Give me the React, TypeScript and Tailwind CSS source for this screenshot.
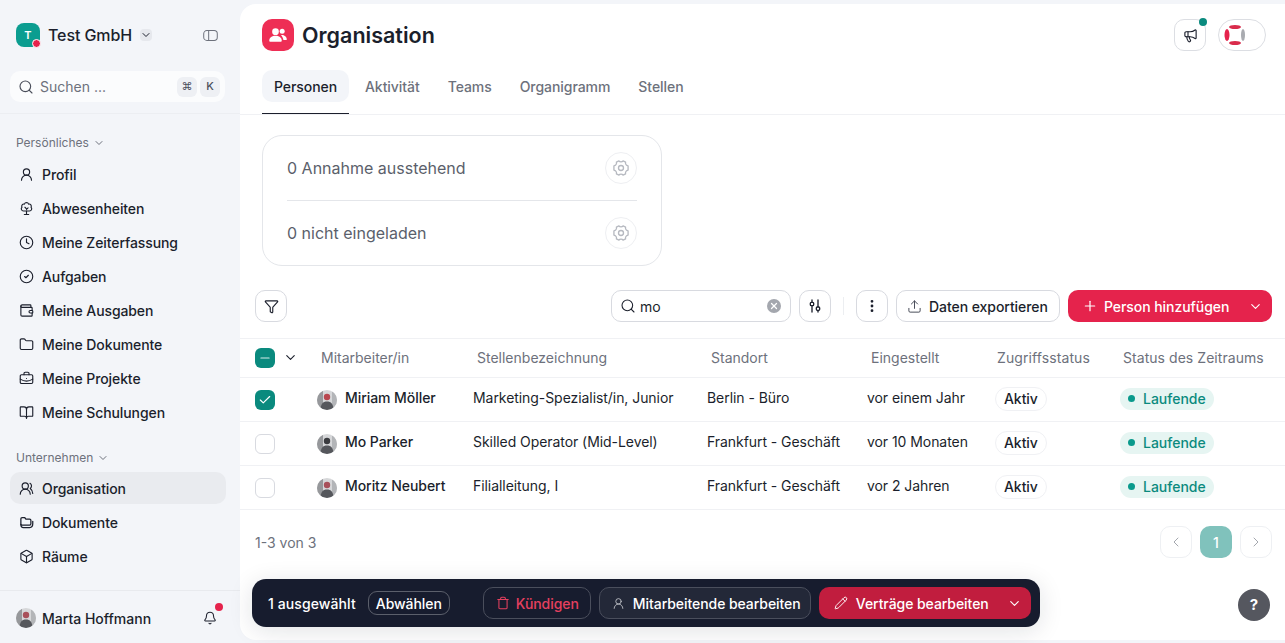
import {
  Bell,
  BookOpen,
  Box,
  BriefcaseBusiness,
  Check,
  ChevronDown,
  ChevronLeft,
  ChevronRight,
  CircleCheck,
  Clock,
  EllipsisVertical,
  Folder,
  Funnel,
  Megaphone,
  Minus,
  Pencil,
  Plus,
  Search,
  Trash,
  Upload,
  UserRound,
  UsersRound,
  Wallet,
  X,
} from "lucide-react";

function FoldersIcon({ className }: { className?: string }) {
  return (
    <svg viewBox="0 0 24 24" fill="none" stroke="currentColor" strokeWidth="2" strokeLinecap="round" strokeLinejoin="round" className={className}>
      <path d="M3 15V6a2 2 0 0 1 2-2h4l2 2.500h6a2 2 0 0 1 2 2V14a2 2 0 0 1-2 2H5a2 2 0 0 1-2-1z" />
      <path d="M3 15c0 3 1.500 5 4 5h10c3 0 5-2.500 5-6v-4" />
    </svg>
  );
}

function TreeIcon({ className }: { className?: string }) {
  return (
    <svg viewBox="0 0 24 24" fill="none" stroke="currentColor" strokeWidth="1.8" strokeLinecap="round" strokeLinejoin="round" className={className}>
      <path d="M12 2.500a3.500 3.500 0 0 1 3.300 2.500 3.500 3.500 0 0 1 4 5 3.500 3.500 0 0 1-2.500 6H7.200a3.500 3.500 0 0 1-2.500-6 3.500 3.500 0 0 1 4-5A3.500 3.500 0 0 1 12 2.500z" />
      <path d="M12 16v5.500M8.500 21.500h7M12 12.500l-2.500-2.500M12 13.500l2.500-2.500" />
    </svg>
  );
}

function SlidersIcon({ className }: { className?: string }) {
  return (
    <svg viewBox="0 0 24 24" fill="none" stroke="currentColor" strokeWidth="2" strokeLinecap="round" className={className}>
      <path d="M7.500 3v3M7.500 12v9M16.500 3v10M16.500 19v2" />
      <rect x="5" y="6.500" width="5" height="5" rx="1.500" />
      <rect x="14" y="13.500" width="5" height="5" rx="1.500" />
    </svg>
  );
}

function HexGear({ className }: { className?: string }) {
  return (
    <svg viewBox="0 0 24 24" fill="none" stroke="currentColor" strokeWidth="1.6" strokeLinejoin="round" className={className}>
      <path d="M9.500 3.500c1 1.500 4 1.500 5 0l3 1.500c-.5 2 1 4 3 4.500v5c-2 .5-3.500 2.500-3 4.500l-3 1.500c-1-1.500-4-1.500-5 0l-3-1.500c.5-2-1-4-3-4.500v-5c2-.5 3.500-2.500 3-4.500z" />
      <circle cx="12" cy="12" r="3" />
    </svg>
  );
}

function Avatar({ hair }: { hair: string }) {
  return (
    <svg viewBox="0 0 20 20" className="size-5 shrink-0 rounded-full">
      <rect width="20" height="20" fill="#d6d7d9" />
      <rect width="6" height="20" fill="#96989b" />
      <rect x="15" width="5" height="20" fill="#b3b5b8" />
      <circle cx="10" cy="7" r="3.200" fill={hair} />
      <path d="M3.500 20c0-6 2.500-8.500 6.500-8.500s6.500 2.500 6.500 8.500z" fill="#55575c" />
    </svg>
  );
}

const PERSONAL = [
  { label: "Profil", icon: UserRound },
  { label: "Abwesenheiten", icon: TreeIcon },
  { label: "Meine Zeiterfassung", icon: Clock },
  { label: "Aufgaben", icon: CircleCheck },
  { label: "Meine Ausgaben", icon: Wallet },
  { label: "Meine Dokumente", icon: Folder },
  { label: "Meine Projekte", icon: BriefcaseBusiness },
  { label: "Meine Schulungen", icon: BookOpen },
];

const COMPANY = [
  { label: "Organisation", icon: UsersRound, active: true },
  { label: "Dokumente", icon: FoldersIcon },
  { label: "Räume", icon: Box },
];

const TABS = ["Aktivität", "Teams", "Organigramm", "Stellen"];

const PEOPLE = [
  { name: "Miriam Möller", job: "Marketing-Spezialist/in, Junior", place: "Berlin - Büro", since: "vor einem Jahr", checked: true, hair: "#b9474f" },
  { name: "Mo Parker", job: "Skilled Operator (Mid-Level)", place: "Frankfurt - Geschäft", since: "vor 10 Monaten", checked: false, hair: "#3a3b3f" },
  { name: "Moritz Neubert", job: "Filialleitung, I", place: "Frankfurt - Geschäft", since: "vor 2 Jahren", checked: false, hair: "#a8505a" },
];

const COLS = "grid grid-cols-[62px_156px_234px_160px_128px_125px_1fr]";

function NavItem({ label, icon: Icon, active }: { label: string; icon: any; active?: boolean }) {
  return (
    <div className={`flex h-[32px] items-center gap-2 rounded-[10px] px-[9px] text-[14px] font-medium tracking-[-0.1px] text-[#1b1f2c] ${active ? "bg-[#e9ebef]" : ""}`}>
      <Icon className="size-[15px] shrink-0" strokeWidth={1.8} />
      {label}
    </div>
  );
}

function SectionLabel({ children }: { children: string }) {
  return (
    <div className="flex items-center gap-1 px-[6px] text-[12px] text-[#6d717c]">
      {children}
      <ChevronDown className="size-3" />
    </div>
  );
}

function Sidebar() {
  return (
    <aside className="flex h-full w-[240px] shrink-0 flex-col bg-[#f3f5f9]">
      <div className="flex items-center px-4 pt-[23px]">
        <div className="relative flex size-6 items-center justify-center rounded-lg bg-[#0b9d90] text-[11px] font-semibold text-white">
          T
          <span className="absolute -bottom-[1px] -right-[1px] size-[9px] rounded-full border border-white bg-[#e5234c]" />
        </div>
        <span className="ml-2 text-[16px] font-medium tracking-[-0.1px] text-[#1b1f2c]">Test GmbH</span>
        <span className="ml-2 flex size-3 items-center justify-center rounded bg-[#e6e8ed]">
          <ChevronDown className="size-3 text-[#1b1f2c]" />
        </span>
        <svg viewBox="0 0 16 12" fill="none" stroke="#6d717c" strokeWidth="1.1" className="ml-auto mr-[6px] h-[11px] w-[15px]">
          <rect x="0.600" y="0.600" width="14.800" height="10.800" rx="3.500" />
          <path d="M6 1v10" />
        </svg>
      </div>
      <div className="ml-[10px] mr-[15px] mt-[24px] flex h-[31px] items-center rounded-[10px] bg-[#fbfcfd] pl-2 pr-[5px] text-[14px] text-[#6d717c]">
        <Search className="mr-[6px] size-4 text-[#4a4e5a]" strokeWidth={1.7} />
        Suchen ...
        <span className="ml-auto flex size-5 items-center justify-center rounded-md bg-[#eef0f4] text-[11px] text-[#4a4e5a]">⌘</span>
        <span className="ml-[3px] flex size-5 items-center justify-center rounded-md bg-[#eef0f4] text-[11px] font-medium text-[#4a4e5a]">K</span>
      </div>
      <div className="mt-[11px] h-px bg-[#eceef2]" />
      <div className="flex-1 pl-[10px] pr-[14px] pt-[20px]">
        <SectionLabel>Persönliches</SectionLabel>
        <div className="mt-[6px] flex flex-col gap-[2px]">
          {PERSONAL.map((item) => (
            <NavItem key={item.label} {...item} />
          ))}
        </div>
        <div className="mt-[21px]">
          <SectionLabel>Unternehmen</SectionLabel>
        </div>
        <div className="mt-[5px] flex flex-col gap-[2px]">
          {COMPANY.map((item) => (
            <NavItem key={item.label} {...item} />
          ))}
        </div>
      </div>
      <div className="flex h-[53px] items-center border-t border-[#e8eaee] px-4 pt-[2px] text-[14px] font-medium text-[#1b1f2c]">
        <Avatar hair="#a8505a" />
        <span className="ml-[6px]">Marta Hoffmann</span>
        <span className="relative ml-auto mr-[7px]">
          <Bell className="size-[14px]" strokeWidth={1.8} />
          <span className="absolute -right-[6px] -top-[8px] size-2 rounded-full bg-[#e5234c]" />
        </span>
      </div>
    </aside>
  );
}

function Header() {
  return (
    <>
      <div className="flex items-center pl-[22px] pr-[19px] pt-[15px]">
        <div className="flex size-8 items-center justify-center rounded-[10px] bg-[#ee2e55]">
          <svg viewBox="0 0 24 24" fill="white" className="size-5">
            <circle cx="9" cy="8" r="4" />
            <circle cx="17" cy="7.500" r="3" />
            <path d="M1.500 19c0-4 3.500-6 7.500-6s7.500 2 7.500 6c0 .8-.5 1-1 1H2.500c-.5 0-1-.2-1-1z" />
            <path d="M15.500 12c3.500-.5 7 1.500 7 5 0 .8-.5 1-1 1h-3c-.5-2.500-1.500-4.500-3-6z" />
          </svg>
        </div>
        <h1 className="ml-2 text-[21.5px] font-semibold text-[#1b1f2c]">Organisation</h1>
        <div className="relative ml-auto flex size-8 items-center justify-center rounded-[10px] border border-[#dcdee3]">
          <Megaphone className="size-[15px] text-[#1b1f2c]" strokeWidth={1.8} />
          <span className="absolute -right-[2px] -top-[2px] size-2 rounded-full bg-[#0a8a7e]" />
        </div>
        <div className="ml-3 flex h-8 w-12 items-center rounded-full border border-[#dcdee3] pl-[4px]">
          <svg viewBox="0 0 24 24" className="size-6">
            <ellipse cx="12" cy="4" rx="6" ry="2" fill="#d92b4b" />
            <ellipse cx="12" cy="20" rx="6" ry="2" fill="#d92b4b" />
            <ellipse cx="4" cy="12" rx="2.500" ry="6" fill="#e5234c" />
            <ellipse cx="20" cy="12" rx="2" ry="6" fill="#a9abb0" />
          </svg>
        </div>
      </div>
      <div className="mt-[19px] flex items-start border-b border-[#f0f1f4] pl-[22px] text-[14px] font-medium tracking-[-0.06px] text-[#6d717c]">
        <div className="h-[44px] w-[87px] border-b border-[#1b1f2c]">
          <div className="flex h-8 items-center justify-center rounded-[10px] bg-[#f3f5f9] text-[#1b1f2c]">Personen</div>
        </div>
        <div className="ml-4 flex h-8 items-center gap-7">
          {TABS.map((t) => (
            <span key={t}>{t}</span>
          ))}
        </div>
      </div>
    </>
  );
}

function InviteCard() {
  return (
    <div className="ml-[22px] mt-[20px] w-[400px] rounded-[20px] border border-[#e4e6ea] px-6 text-[16px] text-[#5b5f6b]">
      {["0 Annahme ausstehend", "0 nicht eingeladen"].map((text, i) => (
        <div key={text} className={`flex items-center justify-between ${i === 0 ? "h-[65px] border-b border-[#e4e6ea]" : "h-[64px]"}`}>
          {text}
          <span className="flex size-8 items-center justify-center rounded-full border border-[#eeeff2] text-[#b6b9c0]">
            <HexGear className="size-5" />
          </span>
        </div>
      ))}
    </div>
  );
}

function Toolbar() {
  const box = "flex size-8 items-center justify-center rounded-[10px] border border-[#d8dae0] text-[#1b1f2c]";
  return (
    <div className="mt-[24px] flex h-8 items-center pl-[15px] pr-[13px] tracking-[-0.06px]">
      <div className={box}>
        <Funnel className="size-[15px]" strokeWidth={1.8} />
      </div>
      <div className="ml-auto flex h-8 w-[180px] items-center rounded-[10px] border border-[#d8dae0] pl-2 pr-[9px] text-[14px] text-[#1b1f2c]">
        <Search className="mr-[4px] size-4" strokeWidth={1.6} />
        mo
        <span className="ml-auto flex size-[14px] items-center justify-center rounded-full bg-[#a4a7ae]">
          <X className="size-[10px] text-white" strokeWidth={3} />
        </span>
      </div>
      <div className={`${box} ml-2`}>
        <SlidersIcon className="size-4" />
      </div>
      <div className="mx-3 h-[18px] w-px bg-[#eceef1]" />
      <div className={box}>
        <EllipsisVertical className="size-4" strokeWidth={2.2} />
      </div>
      <div className="ml-2 flex h-8 w-[164px] items-center gap-[7px] rounded-[10px] border border-[#d8dae0] px-[10px] text-[14px] font-medium text-[#1b1f2c]">
        <Upload className="size-[15px] text-[#4a4e5a]" strokeWidth={1.6} />
        Daten exportieren
      </div>
      <div className="ml-2 flex h-8 w-[204px] items-center rounded-[10px] bg-[#e5234c] pl-[14px] pr-[9px] text-[14px] font-medium text-white">
        <Plus className="mr-[6px] size-4" strokeWidth={1.8} />
        Person hinzufügen
        <ChevronDown className="ml-auto size-[15px]" strokeWidth={1.8} />
      </div>
    </div>
  );
}

function PeopleTable() {
  return (
    <div className="mt-4">
      <div className={`${COLS} h-[40px] items-center border-y border-[#f0f1f4] pb-px pl-[15px] text-[14px] text-[#6d717c]`}>
        <div className="flex items-center gap-[8px]">
          <span className="flex size-5 items-center justify-center rounded-md bg-[#0a8a7e]">
            <Minus className="size-[14px] text-[#d5ecea]" strokeWidth={2} />
          </span>
          <ChevronDown className="size-[15px] text-[#1b1f2c]" strokeWidth={1.8} />
        </div>
        <span className="pl-[4px]">Mitarbeiter/in</span>
        <span className="pl-[4px]">Stellenbezeichnung</span>
        <span className="pl-[4px]">Standort</span>
        <span className="pl-[4px]">Eingestellt</span>
        <span className="pl-[2px] tracking-[0.1px]">Zugriffsstatus</span>
        <span className="pl-[3px] tracking-[0.05px]">Status des Zeitraums</span>
      </div>
      {PEOPLE.map((p) => (
        <div key={p.name} className={`${COLS} h-[44px] items-center border-b border-[#f0f1f4] pl-[15px] text-[14px] tracking-[-0.06px] text-[#1b1f2c]`}>
          <div>
            {p.checked ? (
              <span className="flex size-5 items-center justify-center rounded-md bg-[#0a8a7e]">
                <Check className="size-[14px] text-white" strokeWidth={2} />
              </span>
            ) : (
              <span className="block size-5 rounded-md border border-[#d8dae0]" />
            )}
          </div>
          <div className="flex items-center gap-2 font-medium">
            <Avatar hair={p.hair} />
            <span className="mb-[4px]">{p.name}</span>
          </div>
          <span className="mb-[4px]">{p.job}</span>
          <span className="mb-[4px]">{p.place}</span>
          <span className="mb-[4px]">{p.since}</span>
          <div className="mb-[2px]">
            <span className="inline-flex h-6 items-center rounded-full border border-[#f0f1f4] px-2 font-medium">Aktiv</span>
          </div>
          <div className="mb-[4px]">
            <span className="inline-flex h-[22px] items-center gap-2 rounded-full bg-[#e6f5f2] px-2 font-medium tracking-normal text-[#0a8a7e]">
              <span className="size-[7px] rounded-full bg-[#0a9a8c]" />
              Laufende
            </span>
          </div>
        </div>
      ))}
    </div>
  );
}

function Pagination() {
  const arrow = "flex size-8 items-center justify-center rounded-[10px] border border-[#eef0f3] text-[#a4a7ae]";
  return (
    <div className="mt-4 flex items-center pl-[15px] pr-[13px] text-[14px] text-[#6d717c]">
      1-3 von 3
      <div className={`${arrow} ml-auto`}>
        <ChevronLeft className="size-4" strokeWidth={1.5} />
      </div>
      <div className="ml-2 flex size-8 items-center justify-center rounded-[10px] bg-[#80c2bc] font-medium text-white">1</div>
      <div className={`${arrow} ml-2`}>
        <ChevronRight className="size-4" strokeWidth={1.5} />
      </div>
    </div>
  );
}

function SelectionBar() {
  const outline = "flex h-8 items-center rounded-[10px] border border-[#4a4e5c]";
  return (
    <div className="absolute bottom-[13px] left-[12px] flex h-[48px] w-[788px] items-center whitespace-nowrap rounded-[14px] bg-[#171c2e] pl-4 pr-[9px] text-[14px] font-medium tracking-[-0.06px] text-white shadow-[0_4px_24px_rgba(20,25,40,0.12)]">
      <span className="tracking-[0.1px]">1 ausgewählt</span>
      <span className="ml-3 flex h-6 w-[82px] items-center justify-center rounded-[9px] border border-[#5b5f6b]">Abwählen</span>
      <div className={`${outline} ml-[33px] w-[108px] gap-[6px] pl-[12px] text-[#e5405f]`}>
        <Trash className="size-[14px] shrink-0" strokeWidth={1.8} />
        Kündigen
      </div>
      <div className={`${outline} ml-2 w-[212px] gap-2 bg-[#232838] pl-[12px]`}>
        <UserRound className="size-[13px] shrink-0 text-[#c5c7cd]" strokeWidth={1.6} />
        Mitarbeitende bearbeiten
      </div>
      <div className="ml-2 flex h-8 flex-1 items-center rounded-[10px] bg-[#c11d3e] pl-[15px] pr-[9px]">
        <Pencil className="mr-[8px] size-[14px]" strokeWidth={1.6} />
        Verträge bearbeiten
        <ChevronDown className="ml-auto size-[15px]" strokeWidth={1.8} />
      </div>
    </div>
  );
}

export default function App() {
  return (
    <div className="flex h-[643px] w-[1285px] overflow-hidden bg-[#f3f5f9] font-['Inter',sans-serif]">
      <Sidebar />
      <main className="relative mb-[3px] mt-[4px] flex-1 rounded-l-[16px] bg-white">
        <Header />
        <InviteCard />
        <Toolbar />
        <PeopleTable />
        <Pagination />
        <SelectionBar />
        <div className="absolute bottom-[19px] right-[15px] flex size-8 items-center justify-center rounded-full bg-[#55575f] text-[15px] font-bold text-white">
          ?
        </div>
      </main>
    </div>
  );
}
